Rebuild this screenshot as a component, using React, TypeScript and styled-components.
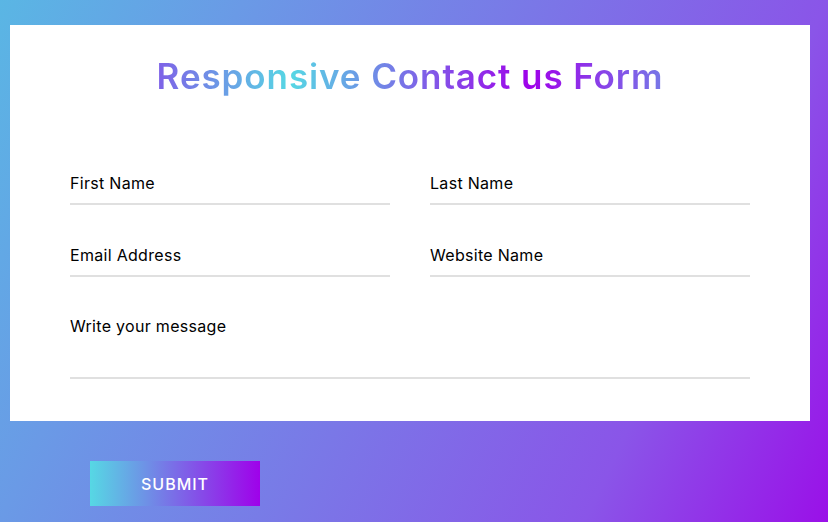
import React from "react";
import styled, { createGlobalStyle } from "styled-components";

const Global = createGlobalStyle`
  html { height: 100%; }
  body {
    margin: 0;
    min-height: 100%;
    font-family: "Inter", "Open Sans", sans-serif;
    background: linear-gradient(115deg, #5ab6e4 0%, #6a9ae6 22.7%, #8a55e8 77.3%, #9a10e8 100%);
  }
  * { box-sizing: border-box; }
`;

const Page = styled.div`
  padding: 25px 0 0 10px;
`;

const Card = styled.div`
  width: 800px;
  background: #fff;
  padding: 26px 40px 42px;
`;

const Title = styled.h1`
  margin: 0;
  text-align: center;
  font-size: 35px;
  font-weight: 600;
  line-height: 51px;
  letter-spacing: 0.9px;
  background: linear-gradient(to left, #56d8e4, #9f01ea, #56d8e4, #9f01ea);
  -webkit-background-clip: text;
  background-clip: text;
  -webkit-text-fill-color: transparent;
  color: transparent;
`;

const Form = styled.form`
  padding: 63px 20px 0;
  display: flex;
  flex-direction: column;
  gap: 32px;
`;

const Row = styled.div`
  display: grid;
  grid-template-columns: 1fr 1fr;
  column-gap: 40px;
`;

const Field = styled.div<{ $tall?: boolean }>`
  height: ${(p) => (p.$tall ? "70px" : "40px")};
  display: flex;
  flex-direction: column;
  justify-content: ${(p) => (p.$tall ? "flex-start" : "flex-end")};
  border-bottom: 2px solid #e0e0e0;
  padding-bottom: ${(p) => (p.$tall ? "0" : "10px")};
  padding-top: ${(p) => (p.$tall ? "7px" : "0")};
`;

const Label = styled.label`
  font-size: 16px;
  line-height: 20px;
  color: #000;
  letter-spacing: 0.3px;
`;

const Submit = styled.button`
  margin: 40px 0 0 80px;
  width: 170px;
  height: 45px;
  border: none;
  padding: 0;
  background: linear-gradient(to right, #56d8e4, #9f01ea);
  color: #fff;
  font-family: "Inter", "Open Sans", sans-serif;
  font-size: 16px;
  font-weight: 500;
  letter-spacing: 1px;
  text-transform: uppercase;
  display: block;
`;

export default function App() {
  return (
    <>
      <Global />
      <Page>
        <Card>
          <Title>Responsive Contact us Form</Title>
          <Form onSubmit={(e) => e.preventDefault()}>
            <Row>
              <Field><Label>First Name</Label></Field>
              <Field><Label>Last Name</Label></Field>
            </Row>
            <Row>
              <Field><Label>Email Address</Label></Field>
              <Field><Label>Website Name</Label></Field>
            </Row>
            <Field $tall><Label>Write your message</Label></Field>
          </Form>
        </Card>
        <Submit type="button">Submit</Submit>
      </Page>
    </>
  );
}
